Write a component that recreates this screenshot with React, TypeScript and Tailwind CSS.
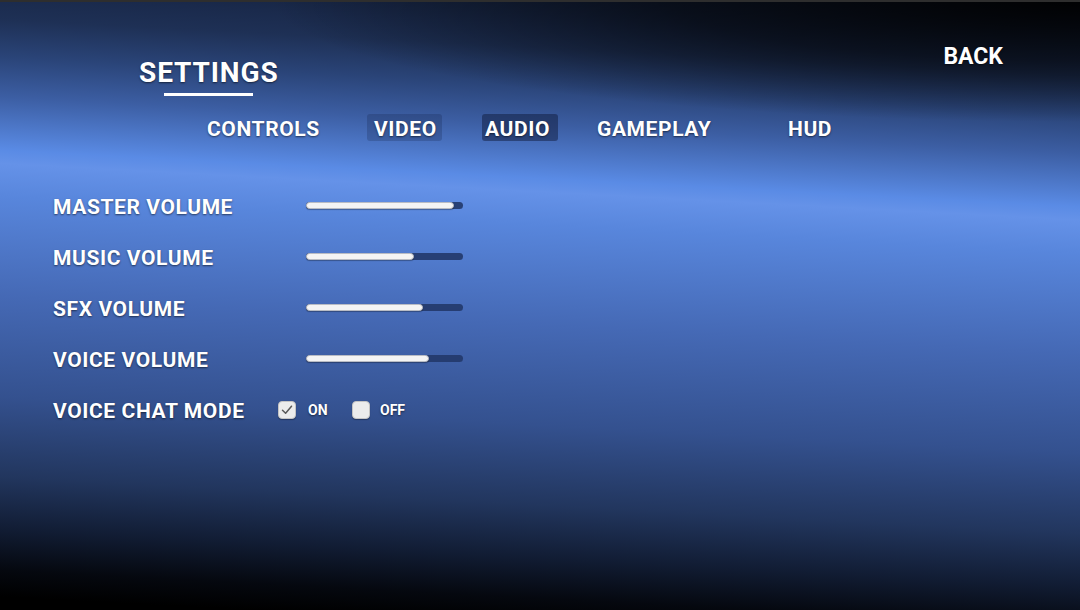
import React from "react";

const sh = "[text-shadow:0_1px_2px_rgba(0,0,0,0.55)]";

function Slider({ pct }: { pct: number }) {
  return (
    <div className="relative mb-[5px] h-[7px] w-[157px] rounded-full bg-[#22386a]/90">
      <div
        className="h-[7px] rounded-full border border-[#b9bcc4] bg-[#f4f4f4] shadow-[0_1px_1px_rgba(0,0,0,0.3)]"
        style={{ width: `${pct}%` }}
      />
    </div>
  );
}

function Check({ on }: { on: boolean }) {
  return (
    <div className="flex h-[18px] w-[18px] shrink-0 items-center justify-center rounded-[4px] border border-[#c4c4c4] bg-[#ececec] shadow-[0_1px_1px_rgba(0,0,0,0.3)]">
      {on && (
        <svg width="12" height="12" viewBox="0 0 12 12" fill="none">
          <path d="M1.5 6.2 L4.6 9.3 L10.5 2.2" stroke="#5a5a5a" strokeWidth="1.5" strokeLinecap="round" strokeLinejoin="round" />
        </svg>
      )}
    </div>
  );
}

export default function App() {
  const rows: [string, number][] = [
    ["MASTER VOLUME", 94.5],
    ["MUSIC VOLUME", 69],
    ["SFX VOLUME", 74.5],
    ["VOICE VOLUME", 78.5],
  ];
  return (
    <div className="flex h-[610px] w-full flex-col overflow-hidden bg-[radial-gradient(ellipse_75%_20%_at_100%_0%,rgba(0,0,0,0.95)_0%,rgba(0,0,0,0.6)_50%,rgba(0,0,0,0)_100%),linear-gradient(183deg,#0f1a30_0%,#1a2a4c_8%,#1e3055_11.4%,#2a4478_17%,#3c5ea3_23%,#5a8be5_31%,#6592e8_33%,#5886dc_38%,#4569b5_53%,#34518f_68%,#22365e_80%,#111c33_88%,#05080f_94%,#000_98%)] font-['Roboto',sans-serif] font-bold text-white">
      <div className="h-[2px] w-full shrink-0 bg-[#2e2e2e]" />
      <div className="flex justify-between">
        <div className="pl-[139px] pt-[57px]">
          <div className={`text-[28px] leading-none tracking-[0.9px] ${sh}`}>SETTINGS</div>
          <div className="ml-[25px] mt-[6px] h-[3px] w-[89px] bg-white" />
        </div>
        <div className={`pr-[77px] pt-[43px] text-[23px] leading-none ${sh}`}>BACK</div>
      </div>
      <div className={`mt-[18px] flex pl-[207px] text-[21px] leading-none tracking-[0.6px] ${sh}`}>
        <div className="flex h-[27px] w-[113px] items-center whitespace-nowrap pt-[3px]">CONTROLS</div>
        <div className="ml-[47px] flex h-[27px] w-[75px] items-center rounded-[3px] bg-[#0a1530]/20 pl-[7px] pt-[3px]">VIDEO</div>
        <div className="ml-[40px] flex h-[27px] w-[76px] items-center rounded-[3px] bg-[#0a1530]/45 pl-[3px] pt-[3px]">AUDIO</div>
        <div className="ml-[39px] flex h-[27px] w-[115px] items-center whitespace-nowrap pt-[3px]">GAMEPLAY</div>
        <div className="ml-[76px] flex h-[27px] items-center pt-[3px]">HUD</div>
      </div>
      <div className="mt-[41px] flex flex-col pl-[53px]">
        {rows.map(([label, pct]) => (
          <div key={label} className="flex h-[51px] items-center">
            <div className={`w-[253px] whitespace-nowrap text-[21px] leading-none tracking-[0.6px] ${sh}`}>{label}</div>
            <Slider pct={pct} />
          </div>
        ))}
        <div className="flex h-[51px] items-center">
          <div className={`w-[225px] whitespace-nowrap text-[21px] leading-none tracking-[0.6px] ${sh}`}>VOICE CHAT MODE</div>
          <div className="mb-[3px] flex items-center">
            <Check on />
            <span className={`ml-[12px] w-[44px] text-[14px] leading-none ${sh}`}>ON</span>
            <Check on={false} />
            <span className={`ml-[10px] text-[14px] leading-none ${sh}`}>OFF</span>
          </div>
        </div>
      </div>
    </div>
  );
}
